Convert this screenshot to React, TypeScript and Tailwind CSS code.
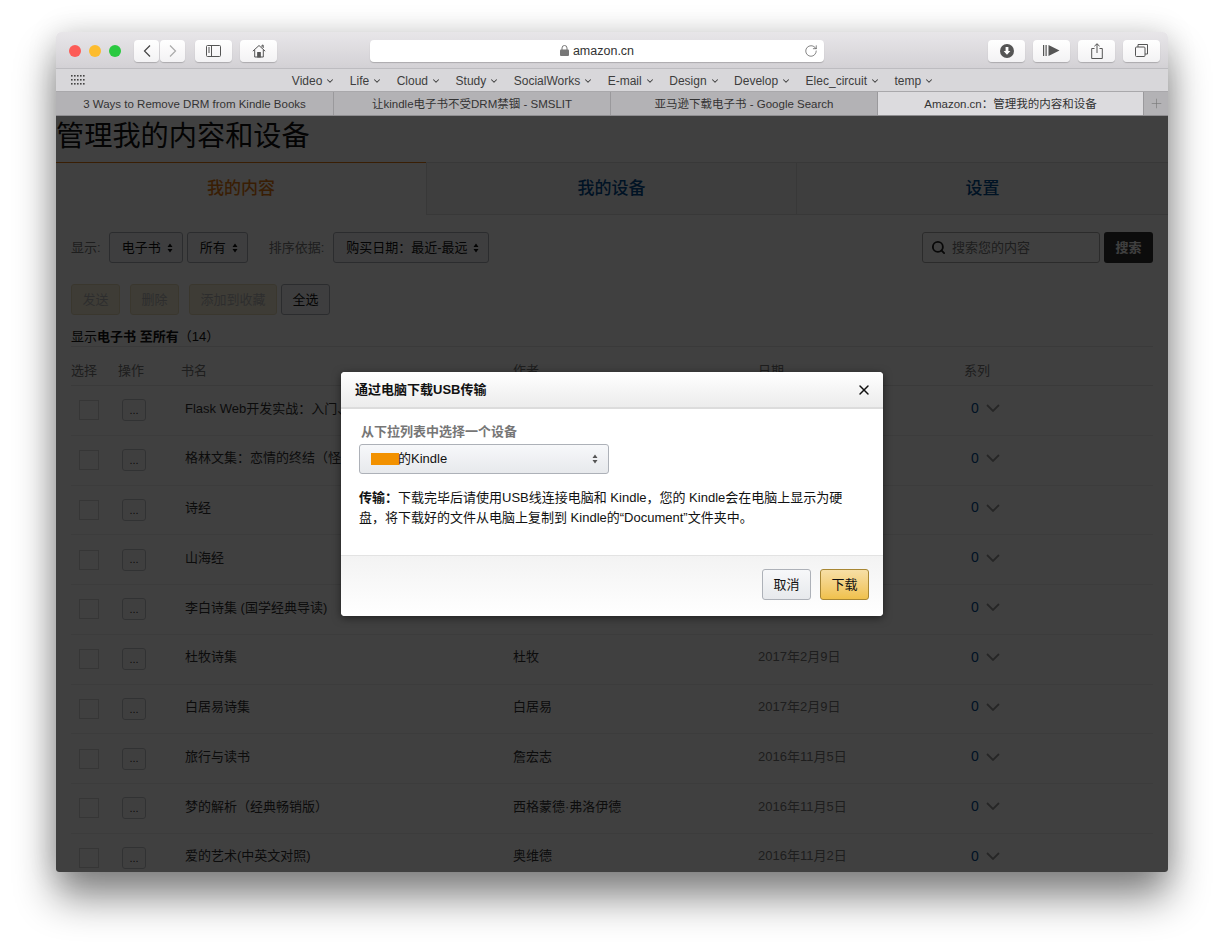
import { ChevronDown, Plus, RotateCw, Search, X } from "lucide-react";

const FONT = "font-['Liberation_Sans','Noto_Sans_CJK_SC',sans-serif]";

const bookmarks = ["Video", "Life", "Cloud", "Study", "SocialWorks", "E-mail", "Design", "Develop", "Elec_circuit", "temp"];

const browserTabs = [
  { label: "3 Ways to Remove DRM from Kindle Books", width: "w-[278px]" },
  { label: "让kindle电子书不受DRM禁锢 - SMSLIT", width: "w-[277px]" },
  { label: "亚马逊下载电子书 - Google Search", width: "w-[267px]" },
  { label: "Amazon.cn：管理我的内容和设备", width: "w-[266px]" },
];

const books = [
  { title: "Flask Web开发实战：入门、进阶与原理解析", author: "李辉", date: "2019年2月9日" },
  { title: "格林文集：恋情的终结（怪...", author: "格雷厄姆·格林", date: "2017年2月9日" },
  { title: "诗经", author: "佚名", date: "2017年2月9日" },
  { title: "山海经", author: "佚名", date: "2017年2月9日" },
  { title: "李白诗集 (国学经典导读)", author: "李白", date: "2017年2月9日" },
  { title: "杜牧诗集", author: "杜牧", date: "2017年2月9日" },
  { title: "白居易诗集", author: "白居易", date: "2017年2月9日" },
  { title: "旅行与读书", author: "詹宏志", date: "2016年11月5日" },
  { title: "梦的解析（经典畅销版）", author: "西格蒙德·弗洛伊德", date: "2016年11月5日" },
  { title: "爱的艺术(中英文对照)", author: "奥维德", date: "2016年11月2日" },
];

function ToolButton({ children, className = "w-[56px]" }: { children: React.ReactNode; className?: string }) {
  return (
    <div className={`flex h-[22px] items-center justify-center rounded-[4px] bg-gradient-to-b from-white to-[#f3f2f4] shadow-[0_1px_1px_rgba(0,0,0,0.2)] ${className}`}>
      {children}
    </div>
  );
}

function UpDown() {
  return (
    <svg width="6" height="10" viewBox="0 0 6 10" className="shrink-0">
      <path d="M3 0.5 L5.5 4 H0.5 Z M3 9.5 L0.5 6 H5.5 Z" fill="currentColor" />
    </svg>
  );
}

function FakeSelect({ label, className }: { label: string; className: string }) {
  return (
    <div className={`flex h-[31px] items-center justify-between whitespace-nowrap rounded-[3px] border border-[#adb1b8] bg-[#f7f8fa] pl-3 pr-[9px] text-[13px] text-[#111] ${className}`}>
      {label}
      <UpDown />
    </div>
  );
}

function GhostButton({ label, className }: { label: string; className: string }) {
  return (
    <div className={`flex h-[31px] items-center justify-center rounded-[3px] border border-[#e8dcb8] bg-[#f7efd8] text-[13px] text-[#b5b5b5] ${className}`}>
      {label}
    </div>
  );
}

function BrowserChrome() {
  return (
    <>
      <div className="flex h-[37px] items-center border-b border-[#bdbcc0] bg-gradient-to-b from-[#e8e6e9] to-[#d3d1d5] pl-[13px] pr-[8px] pt-[1px]">
        <span className="h-3 w-3 rounded-full bg-[#fc5b57]" />
        <span className="ml-2 h-3 w-3 rounded-full bg-[#fdbc2e]" />
        <span className="ml-2 h-3 w-3 rounded-full bg-[#2ac940]" />
        <ToolButton className="ml-[13px] w-[25px]">
          <svg width="10" height="14" viewBox="0 0 10 14" fill="none" stroke="#444" strokeWidth="1.2"><path d="M8 1.5 2.5 7 8 12.5" /></svg>
        </ToolButton>
        <ToolButton className="ml-[1px] w-[25px]">
          <svg width="10" height="14" viewBox="0 0 10 14" fill="none" stroke="#aaa" strokeWidth="1.2"><path d="M2 1.5 7.5 7 2 12.5" /></svg>
        </ToolButton>
        <ToolButton className="ml-[10px] w-[37px]">
          <svg width="15" height="12" viewBox="0 0 15 12" fill="none" stroke="#555"><rect x=".5" y=".5" width="14" height="11" rx="1" /><path d="M5.5 .5v11M2 3h2M2 5h2M2 7h2" /></svg>
        </ToolButton>
        <ToolButton className="ml-[8px] w-[37px]">
          <svg width="14" height="14" viewBox="0 0 14 14" fill="none" stroke="#555"><path d="M.8 7.2 7 1.5l6.2 5.7M2.7 6v7h8.6V6M10 3V1.2h1.2V4" /><rect x="5.7" y="8.5" width="2.6" height="4.5" fill="#555" /></svg>
        </ToolButton>
        <div className="ml-[93px] flex h-[22px] w-[454px] items-center rounded-[4px] bg-white shadow-[0_1px_1px_rgba(0,0,0,0.2)]">
          <div className="flex flex-1 items-center justify-center gap-1 pl-[20px] text-[12.5px] text-[#333]">
            <svg width="9" height="11" viewBox="0 0 9 11"><rect y="4.5" width="9" height="6.5" rx="1" fill="#777" /><path d="M2 5V3a2.5 2.5 0 0 1 5 0v2" fill="none" stroke="#777" /></svg>
            <span className="pt-[1px]">amazon.cn</span>
          </div>
          <RotateCw size={14} strokeWidth={1.1} className="mr-[6px] text-[#444]" />
        </div>
        <ToolButton className="ml-auto w-[37px]">
          <svg width="14" height="14" viewBox="0 0 14 14"><circle cx="7" cy="7" r="7" fill="#555" /><path d="M5.6 3h2.8v4h2L7 10.8 3.6 7h2z" fill="#fff" /></svg>
        </ToolButton>
        <ToolButton className="ml-[8px] w-[37px]">
          <svg width="17" height="11" viewBox="0 0 17 11" fill="#555"><rect width="1.2" height="11" /><rect x="2.5" width="1.2" height="11" /><path d="M5.5 0 16.5 5.5 5.5 11z" /></svg>
        </ToolButton>
        <ToolButton className="ml-[8px] w-[37px]">
          <svg width="12" height="16" viewBox="0 0 12 16" fill="none" stroke="#555"><path d="M3.5 5.5H.7v10h10.6v-10H8.5M6 10V.8M3.4 3.2 6 .8l2.6 2.4" /></svg>
        </ToolButton>
        <ToolButton className="ml-[8px] w-[37px]">
          <svg width="13" height="13" viewBox="0 0 13 13" fill="none" stroke="#555"><rect x=".5" y="3" width="9.5" height="9.5" rx="1" /><path d="M3 3V.5h9.5V10H10" /></svg>
        </ToolButton>
      </div>
      <div className="relative flex h-[23px] items-center justify-center border-b border-[#a9a8ab] bg-[#d8d7da] pt-[1px] text-[12px] text-[#3d3d3d]">
        <svg width="15" height="11" viewBox="0 0 15 11" fill="#444" className="absolute left-[15px] top-[6px]">
          {[0, 1, 2].map((r) => [0, 1, 2, 3, 4].map((c) => <rect key={`${r}${c}`} x={c * 3} y={r * 4} width="1.6" height="1.6" />))}
        </svg>
        <div className="flex gap-[14.5px] pl-[2px]">
          {bookmarks.map((b) => (
            <span key={b} className="flex items-center gap-[3px]">
              {b}
              <ChevronDown size={10} strokeWidth={2.5} />
            </span>
          ))}
        </div>
      </div>
      <div className="flex h-[24px] border-b border-[#8f8e91] text-[11.5px] text-[#333]">
        {browserTabs.map((t, i) => (
          <div
            key={t.label}
            className={`flex items-center justify-center border-r border-[#9a999c] pt-[2px] ${t.width} ${i === 3 ? "bg-[#dcdbde]" : "bg-[#b3b2b5]"}`}
          >
            {t.label}
          </div>
        ))}
        <div className="flex flex-1 items-center justify-center bg-[#b3b2b5] text-[#777]">
          <Plus size={15} strokeWidth={1} />
        </div>
      </div>
    </>
  );
}

function KindlePage() {
  return (
    <div className="h-full overflow-hidden bg-white">
      <h1 className="h-[46px] pt-[1px] text-[28.2px] leading-[38px] text-[#111]">管理我的内容和设备</h1>
      <div className="flex h-[53px] text-[17px] font-medium">
        <div className="flex w-[370px] items-center justify-center border-t border-[#e47911] bg-white text-[#e47911]">我的内容</div>
        <div className="flex w-[370px] items-center justify-center border-b border-l border-t border-[#ddd] bg-[#f5f6f6] text-[#004b91]">我的设备</div>
        <div className="flex flex-1 items-center justify-center border-b border-l border-t border-[#ddd] bg-[#f5f6f6] text-[#004b91]">设置</div>
      </div>
      <div className="px-[15px]">
        <div className="mt-[17px] flex items-center text-[13px] text-[#777]">
          <span className="mr-[8px]">显示:</span>
          <FakeSelect label="电子书" className="w-[74px]" />
          <FakeSelect label="所有" className="ml-[4px] w-[61px]" />
          <span className="ml-[21px] mr-[9px]">排序依据:</span>
          <FakeSelect label="购买日期：最近-最远" className="w-[156px]" />
          <div className="ml-auto flex h-[31px] w-[178px] items-center rounded-[3px] border border-[#aaa] bg-white pl-[8px] text-[#777]">
            <Search size={15} strokeWidth={3} className="mr-[6px] text-[#222]" />
            <span className="pt-[1px]">搜索您的内容</span>
          </div>
          <div className="ml-[4px] flex h-[31px] w-[49px] items-center justify-center rounded-[3px] bg-[#333] font-bold text-white">搜索</div>
        </div>
        <div className="mt-[21px] flex text-[13px]">
          <GhostButton label="发送" className="w-[49px]" />
          <GhostButton label="删除" className="ml-[10px] w-[49px]" />
          <GhostButton label="添加到收藏" className="ml-[10px] w-[88px]" />
          <div className="ml-[4px] flex h-[31px] w-[49px] items-center justify-center rounded-[3px] border border-[#adb1b8] bg-[#f7f8fa] text-[#111]">全选</div>
        </div>
        <div className="flex h-[32px] items-center border-b border-[#e7e7e7] pt-[12px] text-[13px] text-[#111]">
          <span>显示<b>电子书</b> <b>至所有</b>（14）</span>
        </div>
        <div className="flex h-[39px] items-center border-b border-[#e7e7e7] pt-[9px] text-[13px] text-[#777]">
          <span className="w-[47px]">选择</span>
          <span className="w-[63px]">操作</span>
          <span className="w-[332px]">书名</span>
          <span className="w-[245px]">作者</span>
          <span className="w-[206px]">日期</span>
          <span>系列</span>
        </div>
        {books.map((b) => (
          <div key={b.title} className="flex h-[49.75px] shrink-0 items-center border-b border-[#eee] text-[13px] text-[#333]">
            <span className="ml-[8px] h-5 w-5 border border-[#d5d5d5] bg-white" />
            <span className="ml-[23px] flex h-[22px] w-6 items-center justify-center rounded-[3px] border border-[#c4c6ca] bg-[#fafafa] text-[11px] text-[#333]">...</span>
            <span className="mb-[4px] ml-[39px] w-[328px] truncate">{b.title}</span>
            <span className="mb-[4px] w-[245px]">{b.author}</span>
            <span className="mb-[4px] w-[213px] text-[#777]">{b.date}</span>
            <span className="mb-[4px] flex items-center gap-[7px] text-[14px] text-[#004b91]">
              0
              <svg width="14" height="8" viewBox="0 0 14 8" fill="none" stroke="#999" strokeWidth="1.8"><path d="M1 1l6 6 6-6" /></svg>
            </span>
          </div>
        ))}
      </div>
    </div>
  );
}

function UsbDialog() {
  return (
    <div className="absolute left-[285px] top-[256px] w-[542px] overflow-hidden rounded-[4px] bg-white shadow-[0_2px_8px_rgba(0,0,0,0.5)]">
      <div className="flex h-[37px] items-center justify-between border-b-2 border-[#dcdcdc] bg-gradient-to-b from-[#ffffff] to-[#ececec] pl-[14px] pr-[11px] text-[13px] font-bold text-[#111]">
        通过电脑下载USB传输
        <X size={16} strokeWidth={2.2} className="text-[#111]" />
      </div>
      <div className="h-[146px] px-[18px] pt-[13px] text-[13px]">
        <div className="h-[22px] pl-[2px] font-bold text-[#767676]">从下拉列表中选择一个设备</div>
        <div className="flex h-[30px] w-[250px] items-center justify-between rounded-[3px] border border-[#adb1b8] bg-gradient-to-b from-[#f7f8fa] to-[#e7e9ec] pl-[11px] pr-[10px] text-[#111]">
          <span className="flex items-center">
            <span className="mr-[-1px] h-[12px] w-[28px] bg-[#f29100]" />的Kindle
          </span>
          <span className="text-[#555]"><UpDown /></span>
        </div>
        <p className="mt-[14px] text-[13px] leading-[20px] text-[#111]">
          <b>传输：</b>下载完毕后请使用USB线连接电脑和 Kindle，您的 Kindle会在电脑上显示为硬盘，将下载好的文件从电脑上复制到 Kindle的“Document”文件夹中。
        </p>
      </div>
      <div className="flex h-[61px] items-center justify-end gap-[9px] border-t border-[#e3e3e3] bg-gradient-to-b from-[#f3f3f3] to-white pb-[3px] pr-[14px] text-[13px] text-[#111]">
        <div className="flex h-[31px] w-[49px] items-center justify-center rounded-[3px] border border-[#adb1b8] bg-gradient-to-b from-[#f7f8fa] to-[#e7e9ec]">取消</div>
        <div className="flex h-[31px] w-[49px] items-center justify-center rounded-[3px] border border-[#a88734] bg-gradient-to-b from-[#f7dfa5] to-[#f0c14b]">下载</div>
      </div>
    </div>
  );
}

export default function App() {
  return (
    <div className={`h-[952px] w-[1224px] overflow-hidden bg-white px-[56px] pt-[32px] ${FONT}`}>
      <div className="flex h-[840px] flex-col overflow-hidden rounded-t-[5px] rounded-b-[3px] shadow-[0_25px_40px_rgba(0,0,0,0.48),0_0_30px_rgba(0,0,0,0.14)]">
        <BrowserChrome />
        <div className="relative min-h-0 flex-1">
          <KindlePage />
          <div className="absolute inset-0 bg-black/75" />
          <UsbDialog />
        </div>
      </div>
    </div>
  );
}
